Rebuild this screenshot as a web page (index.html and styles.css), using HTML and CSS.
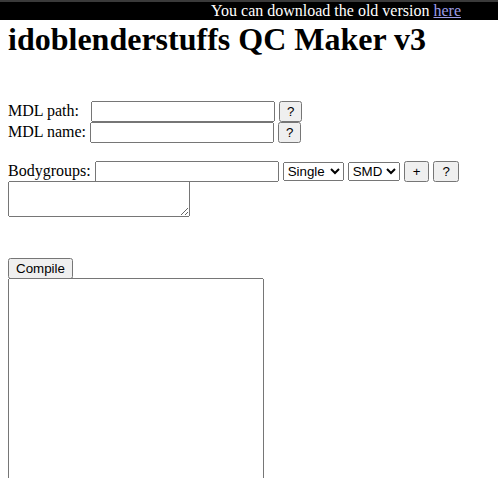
FILE: index.html
```html
<!DOCTYPE html>
<html>
<head>
<meta charset="utf-8">
<title>QC Maker</title>
<link rel="stylesheet" href="styles.css">
</head>
<body>
<div class="topbar">You can download the old version <a class="topbar-link" href="#">here</a></div>
<h1 class="title">idoblenderstuffs QC Maker v3</h1>
<div class="spacer spacer-top"></div>
<div class="row">MDL path:&nbsp;&nbsp; <input class="field" type="text"> <button class="btn">?</button></div>
<div class="row">MDL name: <input class="field" type="text"> <button class="btn">?</button></div>
<div class="spacer"></div>
<div class="row">Bodygroups: <input class="field" type="text"> <select class="sel sel-mode"><option>Single</option></select> <select class="sel"><option>SMD</option></select> <button class="btn btn-small">+</button> <button class="btn btn-small">?</button></div>
<div class="area-row"><textarea class="bg-area"></textarea></div>
<div class="gap"></div>
<div class="row"><button class="btn">Compile</button></div>
<div class="area-row"><textarea class="out-area"></textarea></div>
</body>
</html>
```
FILE: styles.css
```css
body {
  font-family: "Liberation Serif", "Times New Roman", serif;
  font-size: 16px;
  margin: 8px;
}
.topbar {
  position: fixed;
  top: 0;
  left: 0;
  right: 0;
  height: 18px;
  background: #000;
  border-top: 2px solid #3a3a3a;
  color: #fff;
  text-align: right;
  padding-right: 37px;
  line-height: 17px;
}
.topbar-link {
  color: #9c9ce6;
}
.title {
  font-size: 32px;
  margin: 13px 0 21px;
}
.spacer {
  height: 18px;
}
.spacer-top {
  height: 21px;
}
.row {
  height: 21px;
  line-height: 21px;
}
.field {
  width: 184px;
  box-sizing: border-box;
}
.sel-mode {
  width: 61px;
}
.btn-small {
  padding: 1px 7px;
}
.area-row {
  line-height: 0;
}
.bg-area {
  vertical-align: top;
}
.gap {
  height: 40px;
}
.out-area {
  width: 256px;
  height: 210px;
  box-sizing: border-box;
  vertical-align: top;
}
```
